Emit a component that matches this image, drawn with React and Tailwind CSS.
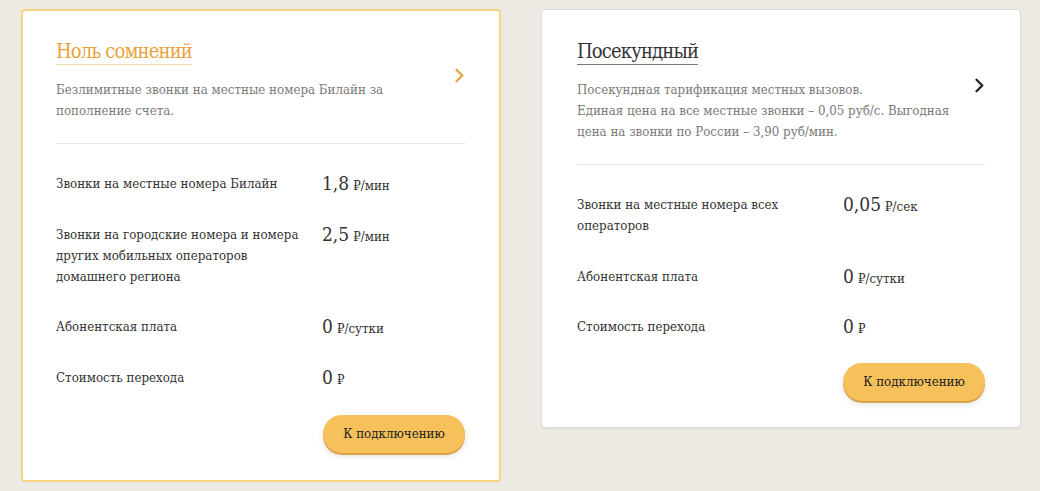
import React from 'react';

const tariffs = [
  {
    id: 'zero',
    name: 'Ноль сомнений',
    active: true,
    description: ['Безлимитные звонки на местные номера Билайн за пополнение счета.'],
    rows: [
      { label: 'Звонки на местные номера Билайн', value: '1,8', unit: '₽/мин' },
      { label: 'Звонки на городские номера и номера других мобильных операторов домашнего региона', value: '2,5', unit: '₽/мин' },
      { label: 'Абонентская плата', value: '0', unit: '₽/сутки' },
      { label: 'Стоимость перехода', value: '0', unit: '₽' },
    ],
  },
  {
    id: 'sec',
    name: 'Посекундный',
    active: false,
    description: [
      'Посекундная тарификация местных вызовов.',
      'Единая цена на все местные звонки – 0,05 руб/с. Выгодная цена на звонки по России – 3,90 руб/мин.',
    ],
    rows: [
      { label: 'Звонки на местные номера всех операторов', value: '0,05', unit: '₽/сек' },
      { label: 'Абонентская плата', value: '0', unit: '₽/сутки' },
      { label: 'Стоимость перехода', value: '0', unit: '₽' },
    ],
  },
];

function Chevron({ color }) {
  return (
    <svg width="11" height="15" viewBox="0 0 11 15" fill="none">
      <path d="M2.5 1.8 L8.3 7.5 L2.5 13.2" stroke={color} strokeWidth="2.3" strokeLinecap="round" strokeLinejoin="round" />
    </svg>
  );
}

function TariffCard({ t }) {
  return (
    <div
      className={`w-[480px] bg-white rounded-[4px] ${
        t.active
          ? 'border-2 border-[#f6d57f] pl-[33px] pr-[34px] pt-[28px] pb-[27px]'
          : 'border border-[#dedbd6] pl-[35px] pr-[35px] pt-[29px] pb-[26px] shadow-[0_1px_2px_rgba(0,0,0,0.06)]'
      }`}
    >
      <div className="flex items-start">
        <div className="flex-1">
          <span
            className={`inline-block text-[20px] leading-[24px] tracking-[-0.85px] pb-[1px] border-b ${
              t.active ? 'text-[#e8a23c] border-[#f2dcae]' : 'text-[#333] border-[#777]'
            }`}
          >
            {t.name}
          </span>
          <div className="mt-[14px] text-[13.2px] leading-[21px] text-[#7a7a7a] pr-[20px]">
            {t.description.map((d, i) => (
              <p key={i}>{d}</p>
            ))}
          </div>
        </div>
        <div className={`${t.active ? 'mt-[29px]' : 'mt-[39px]'} w-[11px] flex justify-end`}>
          <Chevron color={t.active ? '#e8a23c' : '#222'} />
        </div>
      </div>

      <div className="mt-[22px] border-t border-[#e8e8e8]" />

      <div className="mt-[29px] flex flex-col gap-[29.5px]">
        {t.rows.map((r, i) => (
          <div key={i} className="flex items-start">
            <div className="w-[266px] pr-[20px] text-[13.2px] leading-[21px] text-[#333]">{r.label}</div>
            <div className="h-[21px] flex items-baseline text-[#333] leading-[21px]">
              <span className="text-[19px]">{r.value}</span>
              <span className="ml-[4px] text-[13.2px]">{r.unit}</span>
            </div>
          </div>
        ))}
      </div>

      <div className={`${t.active ? 'mt-[27px]' : 'mt-[26px]'} flex justify-end`}>
        <button className="w-[142px] h-[38px] rounded-full bg-[#f6c05b] text-[13.2px] text-[#222] shadow-[0_2px_0_#dca14b,0_3px_6px_rgba(0,0,0,0.12)]">
          К подключению
        </button>
      </div>
    </div>
  );
}

export default function App() {
  return (
    <div className="min-h-[491px] bg-[#edeae4] pt-[9px] pl-[21px] flex items-start gap-[40px] font-stretch-condensed font-['DejaVu_Serif_Condensed','DejaVu_Serif',serif]">
      {tariffs.map(t => (
        <TariffCard key={t.id} t={t} />
      ))}
    </div>
  );
}
